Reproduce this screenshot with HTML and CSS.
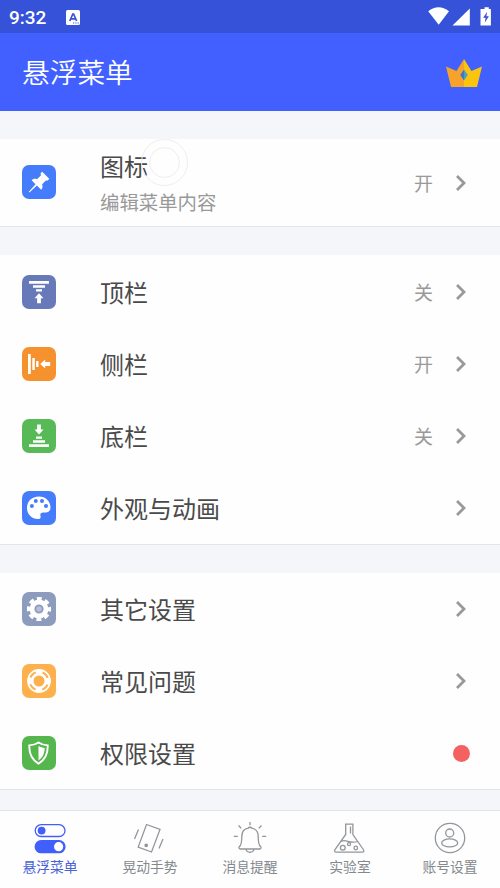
FILE: index.html
```html
<!DOCTYPE html>
<html lang="zh-CN">
<head>
<meta charset="utf-8">
<meta name="viewport" content="width=device-width">
<title>悬浮菜单</title>
<link rel="stylesheet" href="styles.css">
</head>
<body>
<div class="status">
  <span class="time">9:32</span>
  <svg class="note" width="14" height="15" viewBox="0 0 14 15"><rect width="14" height="15" rx="1.5" fill="#fff"/><path d="M3.8 11 6.800 4h.8l3 7M5 8.800h4.300" fill="none" stroke="#3652d9" stroke-width="1.700"/><path d="M7 13h1.200M9.300 13h1.200M11.600 13h1.200" stroke="#3652d9" stroke-width="1"/></svg>
  <svg class="signals" width="64" height="20" viewBox="0 0 64 20" fill="#fff"><path d="M.2 4.200Q10.500-3.500 21 4.200L10.700 17.800Z"/><path d="M41.800 1.500V18.500H24.500Z"/><path d="M54.500 2h2V.2h4.300V2h2.100v16.500h-10.400V2Z"/><path d="m59.200 4.800-4.100 6h2.500l-.9 5 4.200-6.600h-2.500Z" fill="#3652d9"/></svg>
</div>
<header class="header">
  <h1>悬浮菜单</h1>
  <svg width="36" height="28" viewBox="0 0 36 28"><path d="M0 7.500 10.500 12 18 0v28H5Z" fill="#f7a329"/><path d="M18 0 25.500 12 36 7.500 31 28H18Z" fill="#fcc40c"/><path d="M18 10.500 14.200 16 18 21.500Z" fill="#3e78c4"/><path d="M18 10.500 21.800 16 18 21.500Z" fill="#4b9fc4"/></svg>
</header>
<main>
  <section class="card">
    <div class="row tall">
      <svg class="tile" viewBox="0 0 34 34"><rect width="34" height="34" rx="7" fill="#457cfb"/><path d="m20.200 6.800 7 7-1.300 1.800-2-.2-3.800 3.900c.8 2.100.5 3.900-.9 5.400l-4.300-4.200-7.500 7-.6-.7 6.700-7.600-3.900-4c1.500-1.500 3.300-1.800 5.300-1l4-3.800-.3-2.200Z" fill="#fff"/></svg>
      <div class="label"><div class="name">图标</div><div class="sub">编辑菜单内容</div><span class="touch"></span></div>
      <span class="state">开</span>
      <svg class="chev" viewBox="0 0 12 18"><path d="m2 2 7 7-7 7"/></svg>
    </div>
  </section>
  <section class="card">
    <div class="row">
      <svg class="tile" viewBox="0 0 34 34"><rect width="34" height="34" rx="7" fill="#6879b9"/><path d="M7 6h20v2.800H7ZM11 10.300h12v2.500H11ZM14 14.200h6v2.300h-6ZM17 18.200l4.500 5h-2.600v5h-3.800v-5h-2.600Z" fill="#fff"/></svg>
      <div class="label">顶栏</div><span class="state">关</span>
      <svg class="chev" viewBox="0 0 12 18"><path d="m2 2 7 7-7 7"/></svg>
    </div>
    <div class="row">
      <svg class="tile" viewBox="0 0 34 34"><rect width="34" height="34" rx="7" fill="#f6922e"/><path d="M6 7h2.800v20H6ZM10.300 11h2.500v12h-2.500ZM14.200 14h2.300v6h-2.300ZM18.200 17l5-4.500v2.600h5v3.800h-5v2.600Z" fill="#fff"/></svg>
      <div class="label">侧栏</div><span class="state">开</span>
      <svg class="chev" viewBox="0 0 12 18"><path d="m2 2 7 7-7 7"/></svg>
    </div>
    <div class="row">
      <svg class="tile" viewBox="0 0 34 34"><rect width="34" height="34" rx="7" fill="#58b957"/><path d="M7 28h20v-2.800H7ZM11 23.700h12v-2.500H11ZM14 19.800h6v-2.300h-6ZM17 15.400l4.500-5h-2.600v-5h-3.800v5h-2.600Z" fill="#fff"/></svg>
      <div class="label">底栏</div><span class="state">关</span>
      <svg class="chev" viewBox="0 0 12 18"><path d="m2 2 7 7-7 7"/></svg>
    </div>
    <div class="row">
      <svg class="tile" viewBox="0 0 34 34"><rect width="34" height="34" rx="7" fill="#457cfb"/><path d="M17 5.500C9.500 5.500 5 10.500 5 17c0 6.300 4.800 11 11 11 2.300 0 3-1.300 2.500-3-.6-2 .2-3.500 2.700-3.500h3c3 0 4.300-2.500 4.300-5 0-6.200-5-11-11.500-11Z" fill="#fff"/><g fill="#457cfb"><circle cx="9.900" cy="15" r="2"/><circle cx="13.800" cy="10" r="2"/><circle cx="20" cy="10" r="2"/><circle cx="24" cy="15" r="2"/></g></svg>
      <div class="label">外观与动画</div>
      <svg class="chev" viewBox="0 0 12 18"><path d="m2 2 7 7-7 7"/></svg>
    </div>
  </section>
  <section class="card">
    <div class="row">
      <svg class="tile" viewBox="0 0 34 34"><rect width="34" height="34" rx="7" fill="#8d9cbd"/><g fill="none" stroke="#fff"><circle cx="17" cy="17" r="7" stroke-width="4.800"/><circle cx="17" cy="17" r="10.300" stroke-width="3.600" stroke-dasharray="4.800 3.290" stroke-dashoffset="2.400"/></g><circle cx="17" cy="17" r="2.800" fill="#fff" fill-opacity=".35"/></svg>
      <div class="label">其它设置</div>
      <svg class="chev" viewBox="0 0 12 18"><path d="m2 2 7 7-7 7"/></svg>
    </div>
    <div class="row">
      <svg class="tile" viewBox="0 0 34 34"><rect width="34" height="34" rx="7" fill="#fdb04b"/><circle cx="17" cy="17" r="8.700" fill="none" stroke="#fff" stroke-width="6.400"/><circle cx="17" cy="17" r="9.200" fill="none" stroke="#fdb04b" stroke-width="2" stroke-dasharray="7.600 6.850" stroke-dashoffset="3.800" transform="rotate(45 17 17)"/></svg>
      <div class="label">常见问题</div>
      <svg class="chev" viewBox="0 0 12 18"><path d="m2 2 7 7-7 7"/></svg>
    </div>
    <div class="row">
      <svg class="tile" viewBox="0 0 34 34"><rect width="34" height="34" rx="7" fill="#55b64e"/><path d="M16.500 6.500c3 2 6 2.800 9.200 2.900.3 8-2.200 14.200-9.200 18.200-7-4-9.500-10.200-9.200-18.200 3.200-.1 6.200-.9 9.200-2.900Z" fill="none" stroke="#fff" stroke-width="1.900"/><path d="M16.500 10c2.200 1.200 4 1.700 6.200 2-.1 5.500-2 9.600-6.200 12.500Z" fill="#fff"/></svg>
      <div class="label">权限设置</div>
      <span class="dot"></span>
    </div>
  </section>
</main>
<nav class="nav">
  <a class="tab on"><svg viewBox="0 0 34 34"><rect x="2.200" y="3.700" width="29.800" height="11.800" rx="5.900"/><circle cx="8.600" cy="9.600" r="3.900" fill="#415ffb" stroke="none"/><rect x="2.200" y="19.700" width="29.800" height="12" rx="6" fill="#415ffb"/><circle cx="25.600" cy="25.700" r="4.600" fill="#fff" stroke="none"/></svg><span>悬浮菜单</span></a>
  <a class="tab"><svg viewBox="0 0 34 34"><path d="M13.500 3.500 27 8.500 18.500 31 5.200 26ZM5.500 8.500 1.500 18M30 18l-4 9.500"/><circle cx="13.200" cy="24.300" r="1.200" fill="#92969b"/></svg><span>晃动手势</span></a>
  <a class="tab"><svg viewBox="0 0 34 34"><path d="M15.300 7.200c.4-1.300 3-1.300 3.400 0 4.300.7 6.500 4 6.500 8.300 0 6 .2 8.400 2.300 9.900 1 1 .6 2.600-1 2.600h-19c-1.600 0-2-1.600-1-2.600 2.100-1.500 2.300-3.900 2.300-9.900 0-4.300 2.200-7.600 6.500-8.300ZM13 28c.5 4.300 7.500 4.300 8 0M17 1v3.200M5.500 4.500l2.700 2.700M28.500 4.500l-2.700 2.700M.8 15.300h4M29.200 15.300h4"/></svg><span>消息提醒</span></a>
  <a class="tab"><svg viewBox="0 0 34 34"><path d="M12 3.200h8.500M12.700 3.200v10.300L2 28.500c-1 1.700-.3 2.700 1.300 2.700h26c1.600 0 2-1 1-2.700L19.900 13.500V3.200M17.500 5.500v7M8 20.500c5-3 8 2.500 16.500 0"/><circle cx="9.800" cy="26.700" r="2.400"/><circle cx="16" cy="23.200" r="1.500"/><circle cx="22.800" cy="27" r="1.800"/></svg><span>实验室</span></a>
  <a class="tab"><svg viewBox="0 0 34 34"><circle cx="17" cy="17" r="14.700"/><circle cx="16.700" cy="12" r="4"/><ellipse cx="16.700" cy="21.900" rx="8" ry="4"/></svg><span>账号设置</span></a>
</nav>
</body>
</html>
```
FILE: styles.css
```css
* { box-sizing: border-box; }
body {
  margin: 0;
  height: 888px;
  overflow: hidden;
  display: flex;
  flex-direction: column;
  background: #f4f6f9;
  color: #4a4a4a;
  font-family: "Noto Sans CJK SC", sans-serif;
}
svg { display: block; flex: none; }
.status {
  height: 33px;
  flex: none;
  display: flex;
  align-items: center;
  padding: 0 9px;
  background: #3652d9;
  color: #fff;
}
.time { width: 57px; padding-top: 1px; font: 500 19px/33px Roboto, sans-serif; }
.note { margin-top: 1px; }
.signals { margin-left: auto; margin-right: -1px; }
.header {
  height: 78px;
  flex: none;
  display: flex;
  align-items: center;
  justify-content: space-between;
  padding: 0 18px 0 22px;
  background: #4160ff;
}
.header h1 { margin: -2px 0 0; color: #fff; font-size: 27.7px; font-weight: 350; line-height: 40px; }
.header svg { margin-top: 1px; }
main { flex: 1; padding-top: 28px; display: flex; flex-direction: column; gap: 28px; }
.card { background: #fefefe; border-bottom: 1px solid #e2e5e9; }
.card + .card { padding-top: 0.5px; }
.row { height: 72px; display: flex; align-items: center; padding: 0 33px 0 22px; }
.row.tall { height: 87px; }
.row.tall .tile { margin-top: -1px; }
.tile { width: 34px; height: 34px; }
.label { position: relative; margin-left: 44px; flex: 1; font-size: 24px; line-height: 36px; }
.row.tall .label { top: 1.5px; }
.sub { font-size: 19.4px; line-height: 36px; color: #999; }
.touch {
  position: absolute;
  left: 41px;
  top: -9px;
  width: 47px;
  height: 47px;
  border: 1px solid #eee;
  border-radius: 50%;
}
.touch::after {
  content: "";
  position: absolute;
  inset: 7px;
  border: 1px solid #eee;
  border-radius: 50%;
}
.state { margin-right: 22px; font-size: 19px; color: #999; }
.chev { width: 12px; height: 18px; }
.chev path { fill: none; stroke: #999; stroke-width: 2.8; }
.dot { width: 17px; height: 17px; margin-right: -2px; border-radius: 50%; background: #f46161; }
.row:last-child .dot { margin-right: -3px; }
.nav {
  height: 78px;
  flex: none;
  display: flex;
  background: #fefefe;
  border-top: 1px solid #e2e5e9;
}
.tab {
  flex: 1;
  display: flex;
  flex-direction: column;
  align-items: center;
  padding-top: 10px;
  color: #85898e;
  font-size: 13.8px;
  line-height: 20px;
}
.tab svg { width: 34px; height: 34px; fill: none; stroke: #92969b; stroke-width: 1.3; }
.tab span { margin-top: 1px; }
.tab.on { color: #4a62d8; }
.tab.on svg { stroke: #415ffb; }
```
